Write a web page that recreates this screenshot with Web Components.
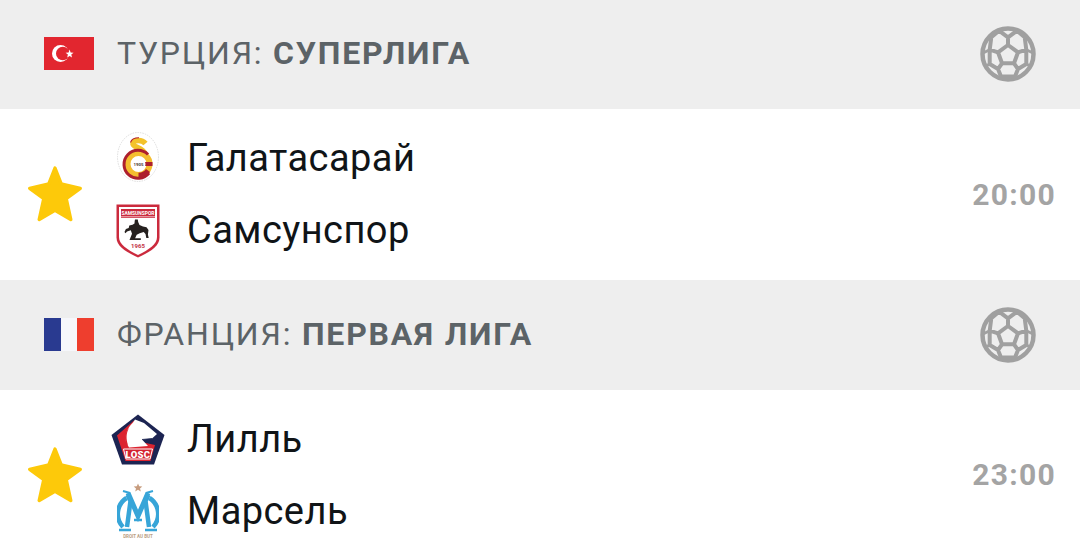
<!DOCTYPE html>
<html lang="ru">
<head>
<meta charset="utf-8">
<title>Матчи</title>
<style>
    html, body { margin: 0; height: 557px; overflow: hidden; background: #fff; }
    body { font-family: Roboto, "Liberation Sans", sans-serif; }
</style>
</head>
<body>
<match-list>
    <league-header name="ТУРЦИЯ:" title-text="СУПЕРЛИГА">
        <svg slot="flag" viewBox="0 0 50 33" width="50" height="33">
            <rect width="50" height="33" fill="#e2262f"/>
            <circle cx="16.500" cy="16.500" r="8.500" fill="#fff"/>
            <circle cx="18.800" cy="16.500" r="6.800" fill="#e2262f"/>
            <polygon fill="#fff" points="25.600,12.600 26.600,15.600 29.600,15.800 27.300,17.600 28,20.600 25.600,18.900 23.200,20.600 23.900,17.600 21.600,15.800 24.600,15.600"/>
        </svg>
    </league-header>
    <match-row time="20:00">
        <team-line name="Галатасарай" style="--logo-shift: -4px">
            <svg viewBox="0 0 42 50" width="42" height="50">
                <ellipse cx="21" cy="25" rx="20.500" ry="24.500" fill="#fff" stroke="#d6d6d6" stroke-width=".8" stroke-dasharray="1.500 1"/>
                <path d="M28.500 11.500C25 7.500 17 7.500 16 11.500 15 15.500 25.500 15 28 22" fill="none" stroke="#f3c22a" stroke-width="5.500"/>
                <path d="M22 5.800C18.500 5.800 14.500 7 13.500 10.500" fill="none" stroke="#b3202c" stroke-width="1.100"/>
                <circle cx="21.500" cy="32" r="11" fill="none" stroke="#f4bd2f" stroke-width="6"/>
                <path d="M31 22.500A14 14 0 1 0 32 41" fill="none" stroke="#ad1f2d" stroke-width="3"/>
                <path d="M24 30h11.500v4H24z" fill="#ad1f2d"/>
                <path d="M21.500 46A14 14 0 0 0 33 40L29 37a9 9 0 0 1-7.500 3.800z" fill="#ad1f2d"/>
                <circle cx="21.500" cy="32" r="7" fill="#fff"/>
                <text x="21.500" y="33.700" font-size="4.400" font-weight="700" letter-spacing="0" text-anchor="middle" fill="#4d3a36" font-family="Roboto, sans-serif">1905</text>
            </svg>
        </team-line>
        <team-line name="Самсунспор">
            <svg viewBox="0 0 44 54" width="44" height="54">
                <path d="M.5.500h43v33c0 9-9 14-21.500 20C9.500 47.500.5 42.500.5 33.500z" fill="#cb2a3d"/>
                <path d="M3 3h38v30c0 7.500-8 12.500-19 18C11 45.500 3 40.500 3 33z" fill="#fff"/>
                <path d="M5 5h34v7.500H5z" fill="#cb2a3d"/>
                <path d="M5 13.500h34" stroke="#cb2a3d" stroke-width=".8"/>
                <text x="22" y="10.600" font-size="4.900" font-weight="700" letter-spacing="0" text-anchor="middle" fill="#fff" font-family="Roboto, sans-serif">SAMSUNSPOR</text>
                <path fill="#26211f" d="M19 15.500h2.800l.4 2.400 1.300 3 3.500 1.600 3.500.8 2 2.700-.6 4.500.8 3.400h-2.400l-.8-4-1.800-2-4 1.400-3 1.400-1.600 3.600h5.700v1.700H13.500l2.500-6.300-1.200-3.500-3.800 1.400-1.500 1.700-1-1.300 1.400-2.900 2.800-1 .6-2.700 3.200-.6 2-1.200.2-2.600z"/>
                <text x="22" y="44" font-size="6" font-weight="700" letter-spacing="0" text-anchor="middle" fill="#c23245" font-family="Roboto, sans-serif">1965</text>
            </svg>
        </team-line>
    </match-row>
    <league-header name="ФРАНЦИЯ:" title-text="ПЕРВАЯ ЛИГА">
        <svg slot="flag" viewBox="0 0 50 33" width="50" height="33">
            <rect width="17" height="33" fill="#293a90"/>
            <rect x="17" width="16" height="33" fill="#f6f7fb"/>
            <rect x="33" width="17" height="33" fill="#ee3e2e"/>
        </svg>
    </league-header>
    <match-row time="23:00">
        <team-line name="Лилль">
            <svg viewBox="0 0 54 51" width="54" height="51">
                <path d="M27 .500 53.500 21 43 50.500H11L.5 21z" fill="#1c2452"/>
                <path d="M23 6.500 6 21.500 14.500 47H39.500L44 31 30 28z" fill="#dc2430"/>
                <path fill="#fff" d="M24 5.500 33 9 46 20 41 24.500 31 25.500 37 32 18 33.500 15 28C13.500 22 16 14 22 8.500z"/>
                <path fill="#dc2430" d="M18 14c-3 5-3 11-1 17l-2-1c-2-6-1-12 3-16z"/>
                <path d="M31 25.500 41 24.500" stroke="#1c2452" stroke-width=".8"/>
                <path d="M12.500 35h29l-2.500 10H15z" fill="#d32230" stroke="#fff" stroke-width="1"/>
                <text x="27" y="43.500" font-size="9.500" font-weight="900" letter-spacing=".3" text-anchor="middle" fill="#fff" font-family="Roboto, sans-serif">LOSC</text>
            </svg>
        </team-line>
        <team-line name="Марсель">
            <svg viewBox="0 0 42 56" width="42" height="56">
                <polygon points="21,.500 22.200,3.300 25.300,3.500 23,5.400 23.800,8.400 21,6.800 18.200,8.400 19,5.400 16.700,3.500 19.800,3.300" fill="#c79c7e"/>
                <path d="M9.500 15A19 19 0 0 0 6 44M32.500 15A19 19 0 0 1 36 44" fill="none" stroke="#37a5d8" stroke-width="4.500"/>
                <path d="M10.500 12 13.500 18 10 44M31.500 12 28.500 18 32 44" fill="none" stroke="#37a5d8" stroke-width="4.500"/>
                <path d="M11 10 21 33 31 10" fill="none" stroke="#37a5d8" stroke-width="5"/>
                <path d="M2 47h12M28 47h12M17 37h8" stroke="#37a5d8" stroke-width="2.500"/>
                <path d="M6 8l7 2M36 8l-7 2" stroke="#37a5d8" stroke-width="2"/>
                <text x="21" y="54.500" font-size="4.500" font-weight="700" letter-spacing="0" text-anchor="middle" fill="#b9a184" font-family="Roboto, sans-serif">DROIT AU BUT</text>
            </svg>
        </team-line>
    </match-row>
</match-list>

<script>
class MatchList extends HTMLElement {
    constructor() {
        super();
        const shadow = this.attachShadow({mode: 'open'});
        shadow.innerHTML = `
            <style>
                :host { display: block; }
            </style>
            <slot></slot>
        `;
    }
}

class LeagueHeader extends HTMLElement {
    constructor() {
        super();
        const shadow = this.attachShadow({mode: 'open'});
        const name = this.getAttribute('name') || '';
        const titleText = this.getAttribute('title-text') || '';

        shadow.innerHTML = `
            <style>
                :host {
                    align-items: center;
                    background: #eeeeee;
                    box-sizing: border-box;
                    color: #5c6367;
                    display: flex;
                    font-size: 32px;
                    height: 109.4px;
                    letter-spacing: 1.8px;
                    padding: 0 44px 0 44px;
                }
                .flag { display: flex; margin-right: 23px; margin-top: -2px; }
                .label { flex: 1; margin-top: -3px; white-space: nowrap; }
                b { font-weight: 700; }
                svg.ball { margin-top: -1px; }
            </style>
            <span class="flag"><slot name="flag"></slot></span>
            <span class="label">${name} <b>${titleText}</b></span>
            <svg class="ball" viewBox="0 0 56 56" width="56" height="56" fill="none" stroke="#a0a0a0" stroke-width="4" stroke-linejoin="round">
                <circle cx="28" cy="28" r="25.500" stroke-width="4.500"/>
                <path d="M28 19 38 26.300 34 37.300H22L18 26.300z"/>
                <path d="M28 19V11.300L19 4.700M28 11.300 37 4.700M38 26.300 46.300 23.700 44.700 11.300 37 4.700M18 26.300 9.700 23.700 11.300 11.300 19 4.700M34 37.300 38 43 46.300 38 46.300 23.700M22 37.300 18 43 9.700 38 9.700 23.700M18 43 21 50.500H35L38 43"/>
                <path d="M46.300 23.700 53 27M9.700 23.700 3 27M46.300 38 50 40M9.700 38 6 40M21 50.500 24 53.500M35 50.500 32 53.500" stroke-width="2.800"/>
            </svg>
        `;
    }
}

class MatchRow extends HTMLElement {
    constructor() {
        super();
        const shadow = this.attachShadow({mode: 'open'});
        const time = this.getAttribute('time') || '';

        shadow.innerHTML = `
            <style>
                :host {
                    align-items: center;
                    background: #fff;
                    box-sizing: border-box;
                    display: flex;
                    height: 171px;
                    padding: 0 24px 0 26px;
                }
                svg { flex: none; margin: -3px 23.5px 0 0; }
                .teams { display: flex; flex: 1; flex-direction: column; }
                .time {
                    color: #a4a4a4;
                    font-size: 30px;
                    font-weight: 700;
                    letter-spacing: 1.3px;
                    margin-top: -1px;
                }
            </style>
            <svg viewBox="0 0 58 58" width="58" height="58">
                <path fill="#fdc90a" stroke="#fdc90a" stroke-width="3.400" stroke-linejoin="round" d="M29 4 35.200 19.800 54.300 24.300 40.200 34.700 44.800 55.500 29 46.300 13.200 55.500 17.800 34.700 3.700 24.300 22.800 19.800z"/>
            </svg>
            <div class="teams"><slot></slot></div>
            <span class="time">${time}</span>
        `;
    }
}

class TeamLine extends HTMLElement {
    constructor() {
        super();
        const shadow = this.attachShadow({mode: 'open'});
        const name = this.getAttribute('name') || '';

        shadow.innerHTML = `
            <style>
                :host {
                    align-items: center;
                    color: #101417;
                    display: flex;
                    font-size: 38px;
                    height: 72px;
                    letter-spacing: .45px;
                }
                .logo {
                    display: flex;
                    justify-content: center;
                    margin: var(--logo-shift, 0) 19.5px 0 0;
                    width: 60px;
                }
                .name { margin-top: -1px; white-space: nowrap; }
            </style>
            <span class="logo"><slot></slot></span>
            <span class="name">${name}</span>
        `;
    }
}

customElements.define('match-list', MatchList);
customElements.define('league-header', LeagueHeader);
customElements.define('match-row', MatchRow);
customElements.define('team-line', TeamLine);
</script>
</body>
</html>
